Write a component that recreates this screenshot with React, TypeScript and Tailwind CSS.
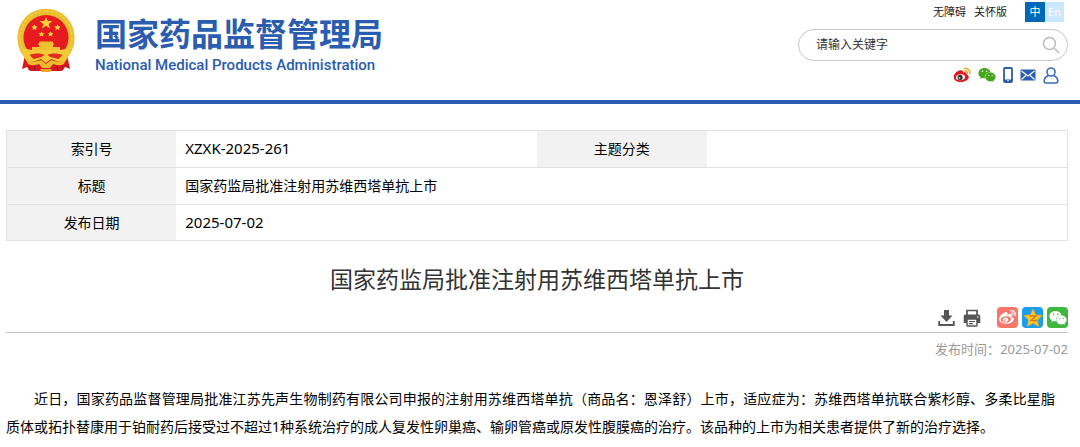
import type { ReactNode } from "react";
import { FaWeibo, FaWeixin } from "react-icons/fa";

const sans = "font-['Noto_Sans','Noto_Sans_CJK_SC',sans-serif]";

const article = {
  index: "XZXK-2025-261",
  title: "国家药监局批准注射用苏维西塔单抗上市",
  date: "2025-07-02",
};

function Emblem() {
  return (
    <svg viewBox="0 0 60 66" className="h-[66px] w-[60px] shrink-0" aria-hidden="true">
      <path d="M30 .8C14 .8 1.500 13.500 1.500 29.500c0 9 3 16 8.500 21.500h40c5.500-5.500 8.500-12.500 8.500-21.500C58.500 13.500 46 .8 30 .8z" fill="#e9bd2e" />
      <path d="M30 3C15.500 3 4 14.500 4 29.500c0 6 1.500 11.500 4.500 16M30 3c14.500 0 26 11.500 26 26.500 0 6-1.500 11.500-4.500 16" fill="none" stroke="#f3cf45" strokeWidth="1.500" strokeDasharray="3 1.500" />
      <circle cx="30" cy="29.500" r="22.500" fill="#e61b22" />
      <path d="M9 47l9-1h24l9 1 3 14-5-2-3 4H14l-3-4-5 2z" fill="#d8181f" />
      <path d="M30 9l1.700 4h4.600l-3.700 3 1.400 4.400-4-2.600-4 2.600 1.400-4.400-3.700-3h4.600z" fill="#fbd433" />
      <path d="M18.500 16.500l1 1.800 2 .2-1.400 1.400.3 2-1.900-.9-1.900.9.3-2-1.400-1.400 2-.2zM41.500 16.500l1 1.800 2 .2-1.400 1.400.3 2-1.900-.9-1.900.9.3-2-1.400-1.400 2-.2zM25.500 23.500l.9 1.600 1.900.2-1.300 1.300.3 1.900-1.800-.9-1.800.9.3-1.900-1.300-1.300 1.900-.2zM34.500 23.500l.9 1.600 1.900.2-1.300 1.300.3 1.900-1.800-.9-1.800.9.3-1.900-1.300-1.300 1.900-.2z" fill="#fbd433" />
      <path d="M23.500 33.500h13l1.500 3.500h-1v2h7v3H16v-3h7v-2h-1z" fill="#efc02f" />
      <path d="M5 40l11 2h28l11-2-3 9-3 5-9-1-5-2-5 4-5-4-5 2-9 1-3-5z" fill="#f4c936" />
      <path d="M13.500 47c5-2 12-2 15 0l-3 2-8 2zM46.500 47c-5-2-12-2-15 0l3 2 8 2z" fill="#e02b20" />
      <path d="M10 51c5 3 11 3 15 1l5 4 5-4c4 2 10 2 15-1l-2 5c-4 2-8 1-11 0l-3 4h-8l-3-4c-3 1-7 2-11 0z" fill="#efb92d" />
      <path d="M14 58l-1 4M19 58l-1 5M41 58l1 5M46 58l1 4" stroke="#8f1418" strokeWidth="1" />
      <path d="M24 61h12l-2 3h-8z" fill="#e9a62a" />
    </svg>
  );
}

function WeiboColor() {
  return (
    <svg viewBox="0 0 18 16" className="h-4 w-[18px]" aria-hidden="true">
      <path d="M7.200 3.200C4.500 3.400.7 6.800.7 10c0 3 3 5 7 5 4.600 0 8-2.400 8-5 0-1.600-1.300-2.500-2.300-2.800.5-1.500.2-2.600-3.400-1.400.5-1.700-.6-2.800-2.800-2.600z" fill="#e0161d" />
      <ellipse cx="7.500" cy="10.200" rx="4.600" ry="3" transform="rotate(-7 7.500 10.200)" fill="#fff" />
      <circle cx="7.100" cy="10.400" r="2.600" fill="#3a3a3a" />
      <circle cx="6.400" cy="11" r=".8" fill="#fff" />
      <path d="M11.500 1.600c3.500-.8 6 2 5.100 5M11.900 4.100c1.600-.4 2.700.8 2.300 2.300" fill="none" stroke="#f0a91c" strokeWidth="1.500" strokeLinecap="round" />
    </svg>
  );
}

function PhoneIcon() {
  return (
    <svg viewBox="0 0 10 16" className="h-4 w-[10px]" aria-hidden="true">
      <rect x="1" y="1" width="8" height="14" rx="1" fill="#fff" stroke="#2a5caf" strokeWidth="1.800" />
      <path d="M1 12.500h8V15H1z" fill="#2a5caf" />
      <circle cx="5" cy="13.500" r=".8" fill="#fff" />
    </svg>
  );
}

function MailIcon() {
  return (
    <svg viewBox="0 0 16 12" className="h-3 w-4" aria-hidden="true">
      <rect x=".5" y=".5" width="15" height="11" rx="1" fill="#2a5caf" />
      <path d="M1.500 2L8 7l6.500-5M1.500 10.500l4.300-4M14.500 10.500l-4.300-4" fill="none" stroke="#fff" strokeWidth="1.100" />
    </svg>
  );
}

function UserIcon() {
  return (
    <svg viewBox="0 0 16 17" className="h-[17px] w-4" fill="none" stroke="#3d6cb9" strokeWidth="1.600" aria-hidden="true">
      <circle cx="8" cy="5" r="4" />
      <path d="M5.300 8.600C3 9.600 1.200 11.600 1.200 14c0 1.300.6 2 1.800 2h10c1.200 0 1.800-.7 1.800-2 0-2.400-1.800-4.400-4.100-5.400" />
    </svg>
  );
}

function DownloadIcon() {
  return (
    <svg viewBox="0 0 17 18" className="h-[18px] w-[17px]" aria-hidden="true">
      <path d="M6 1h5v5.500h3.500L8.500 13 2.500 6.500H6z" fill="#555" />
      <path d="M1.200 12v4h14.600v-4" fill="none" stroke="#555" strokeWidth="1.800" />
    </svg>
  );
}

function PrintIcon() {
  return (
    <svg viewBox="0 0 18 18" className="h-[18px] w-[18px]" aria-hidden="true">
      <path d="M4 6V1.500h10V6" fill="none" stroke="#555" strokeWidth="1.700" />
      <path d="M2.500 5.500h13A1.800 1.800 0 0 1 17.300 7.300V14H.7V7.300A1.800 1.800 0 0 1 2.500 5.500z" fill="#555" />
      <rect x="4" y="10" width="10" height="7" rx=".8" fill="#fff" stroke="#555" strokeWidth="1.500" />
      <path d="M6 12.500h6M6 14.600h4" stroke="#555" strokeWidth="1.200" />
      <circle cx="14.800" cy="8" r=".8" fill="#fff" />
    </svg>
  );
}

function QzoneIcon() {
  return (
    <svg viewBox="0 0 20 20" className="h-5 w-5" aria-hidden="true">
      <path d="M10 .8l2.700 6 6.500.7-4.800 4.400 1.300 6.500L10 15.200l-5.700 3.200 1.300-6.500L.8 7.500l6.500-.7z" fill="#fbc924" stroke="#e9a51b" strokeWidth=".6" />
      <path d="M6.500 8h6.700l-5 4.300c2 .5 4 .4 6-.1" fill="none" stroke="#d9771c" strokeWidth="1.500" />
    </svg>
  );
}

function IconLink({ label, className, children }: { label: string; className?: string; children: ReactNode }) {
  return (
    <a href="#" aria-label={label} className={className}>
      {children}
    </a>
  );
}

function Header() {
  return (
    <header className="flex h-[104px] items-start justify-between border-b-4 border-[#2a5caf] pl-4 pr-3">
      {/* logo */}
      <a href="#" className="flex gap-[19px] pt-2 text-[#2a5caf]">
        <Emblem />
        <span className="flex flex-col gap-1 pt-2">
          <span className="text-[32px] leading-9 font-bold">国家药品监督管理局</span>
          <span className="font-[Roboto,sans-serif] text-[15px] leading-[18px] font-medium">
            National Medical Products Administration
          </span>
        </span>
      </a>

      {/* tools */}
      <div className="flex w-[270px] flex-col items-end pt-0.5">
        <nav className="flex h-5 items-center pr-1 text-[11px] text-[#222]">
          <a href="#" className="mr-2">无障碍</a>
          <a href="#" className="mr-[18px]">关怀版</a>
          <a href="#" className="flex h-5 w-5 items-center justify-center bg-[#0068b7] text-white">中</a>
          <a href="#" className="flex h-5 w-[19px] items-center justify-center bg-[#cce8ff] text-white">En</a>
        </nav>
        <form className="mt-[7px] flex h-8 w-full items-center rounded-full border border-[#c8c8c8] pl-[17px] pr-[7px]">
          <input
            type="text"
            aria-label="搜索"
            placeholder="请输入关键字"
            className="min-w-0 flex-1 text-xs outline-none placeholder:text-[#333]"
          />
          <button type="button" aria-label="搜索">
            <svg viewBox="0 0 18 18" className="h-[18px] w-[18px]" fill="none" stroke="#b9b9b9" strokeWidth="1.500">
              <circle cx="7.500" cy="7.500" r="6" />
              <path d="M12 12l5 5" />
            </svg>
          </button>
        </form>
        <div className="mt-[5px] flex items-center gap-[7px] pr-[9px]">
          <IconLink label="微博"><WeiboColor /></IconLink>
          <IconLink label="微信"><FaWeixin className="h-[18px] w-[18px] text-[#45a51c]" /></IconLink>
          <IconLink label="手机版"><PhoneIcon /></IconLink>
          <IconLink label="邮箱"><MailIcon /></IconLink>
          <IconLink label="用户"><UserIcon /></IconLink>
        </div>
      </div>
    </header>
  );
}

export default function App() {
  return (
    <div className={`${sans} bg-white text-black`} lang="zh-CN">
      <Header />

      <main className="pt-[26px] pr-3 pl-1.5">
        <table className="w-full table-fixed border-collapse text-sm [&_td]:border-y [&_td]:border-[#e2e2e2] [&_td]:pl-[9px] [&_th]:border-y [&_th]:border-[#e2e2e2] [&_th]:bg-[#f2f2f2] [&_th]:font-normal">
          <colgroup>
            <col className="w-[16%]" />
            <col className="w-[34%]" />
            <col className="w-[16%]" />
            <col className="w-[34%]" />
          </colgroup>
          <tbody className="border-x border-[#e2e2e2]">
            <tr className="h-[37px]">
              <th scope="row">索引号</th>
              <td className="text-[15px]">{article.index}</td>
              <th scope="row">主题分类</th>
              <td />
            </tr>
            <tr className="h-[37px]">
              <th scope="row">标题</th>
              <td colSpan={3}>{article.title}</td>
            </tr>
            <tr className="h-9">
              <th scope="row">发布日期</th>
              <td colSpan={3} className="text-[15px]">{article.date}</td>
            </tr>
          </tbody>
        </table>

        <h1 className="mt-5 text-center text-[23px] leading-9 text-[#333]">{article.title}</h1>

        {/* share bar */}
        <div className="mt-2.5 flex items-center justify-end border-b border-[#c4c4c4] pb-1">
          <button type="button" aria-label="下载" className="mr-2"><DownloadIcon /></button>
          <button type="button" aria-label="打印" className="mr-4"><PrintIcon /></button>
          <div className="flex gap-1">
            <IconLink label="分享到微博" className="flex h-[21px] w-[21px] items-center justify-center rounded-sm bg-[#f9766a] text-white">
              <FaWeibo className="h-[17px] w-[17px]" />
            </IconLink>
            <IconLink label="分享到QQ空间" className="flex h-[21px] w-[21px] items-center justify-center rounded-sm bg-[#1b9df0]">
              <QzoneIcon />
            </IconLink>
            <IconLink label="分享到微信" className="flex h-[21px] w-[21px] items-center justify-center rounded-sm bg-[#3cb83f] text-white">
              <FaWeixin className="h-[18px] w-[18px]" />
            </IconLink>
          </div>
        </div>
        <p className="mt-1.5 text-right text-[13px] leading-5 text-[#999]">发布时间：{article.date}</p>

        <p className="mt-[26px] pr-[13px] pb-1.5 text-justify indent-7 text-sm leading-7">
          近日，国家药品监督管理局批准江苏先声生物制药有限公司申报的注射用苏维西塔单抗（商品名：恩泽舒）上市，适应症为：苏维西塔单抗联合紫杉醇、多柔比星脂质体或拓扑替康用于铂耐药后接受过不超过1种系统治疗的成人复发性卵巢癌、输卵管癌或原发性腹膜癌的治疗。该品种的上市为相关患者提供了新的治疗选择。
        </p>
      </main>
    </div>
  );
}
